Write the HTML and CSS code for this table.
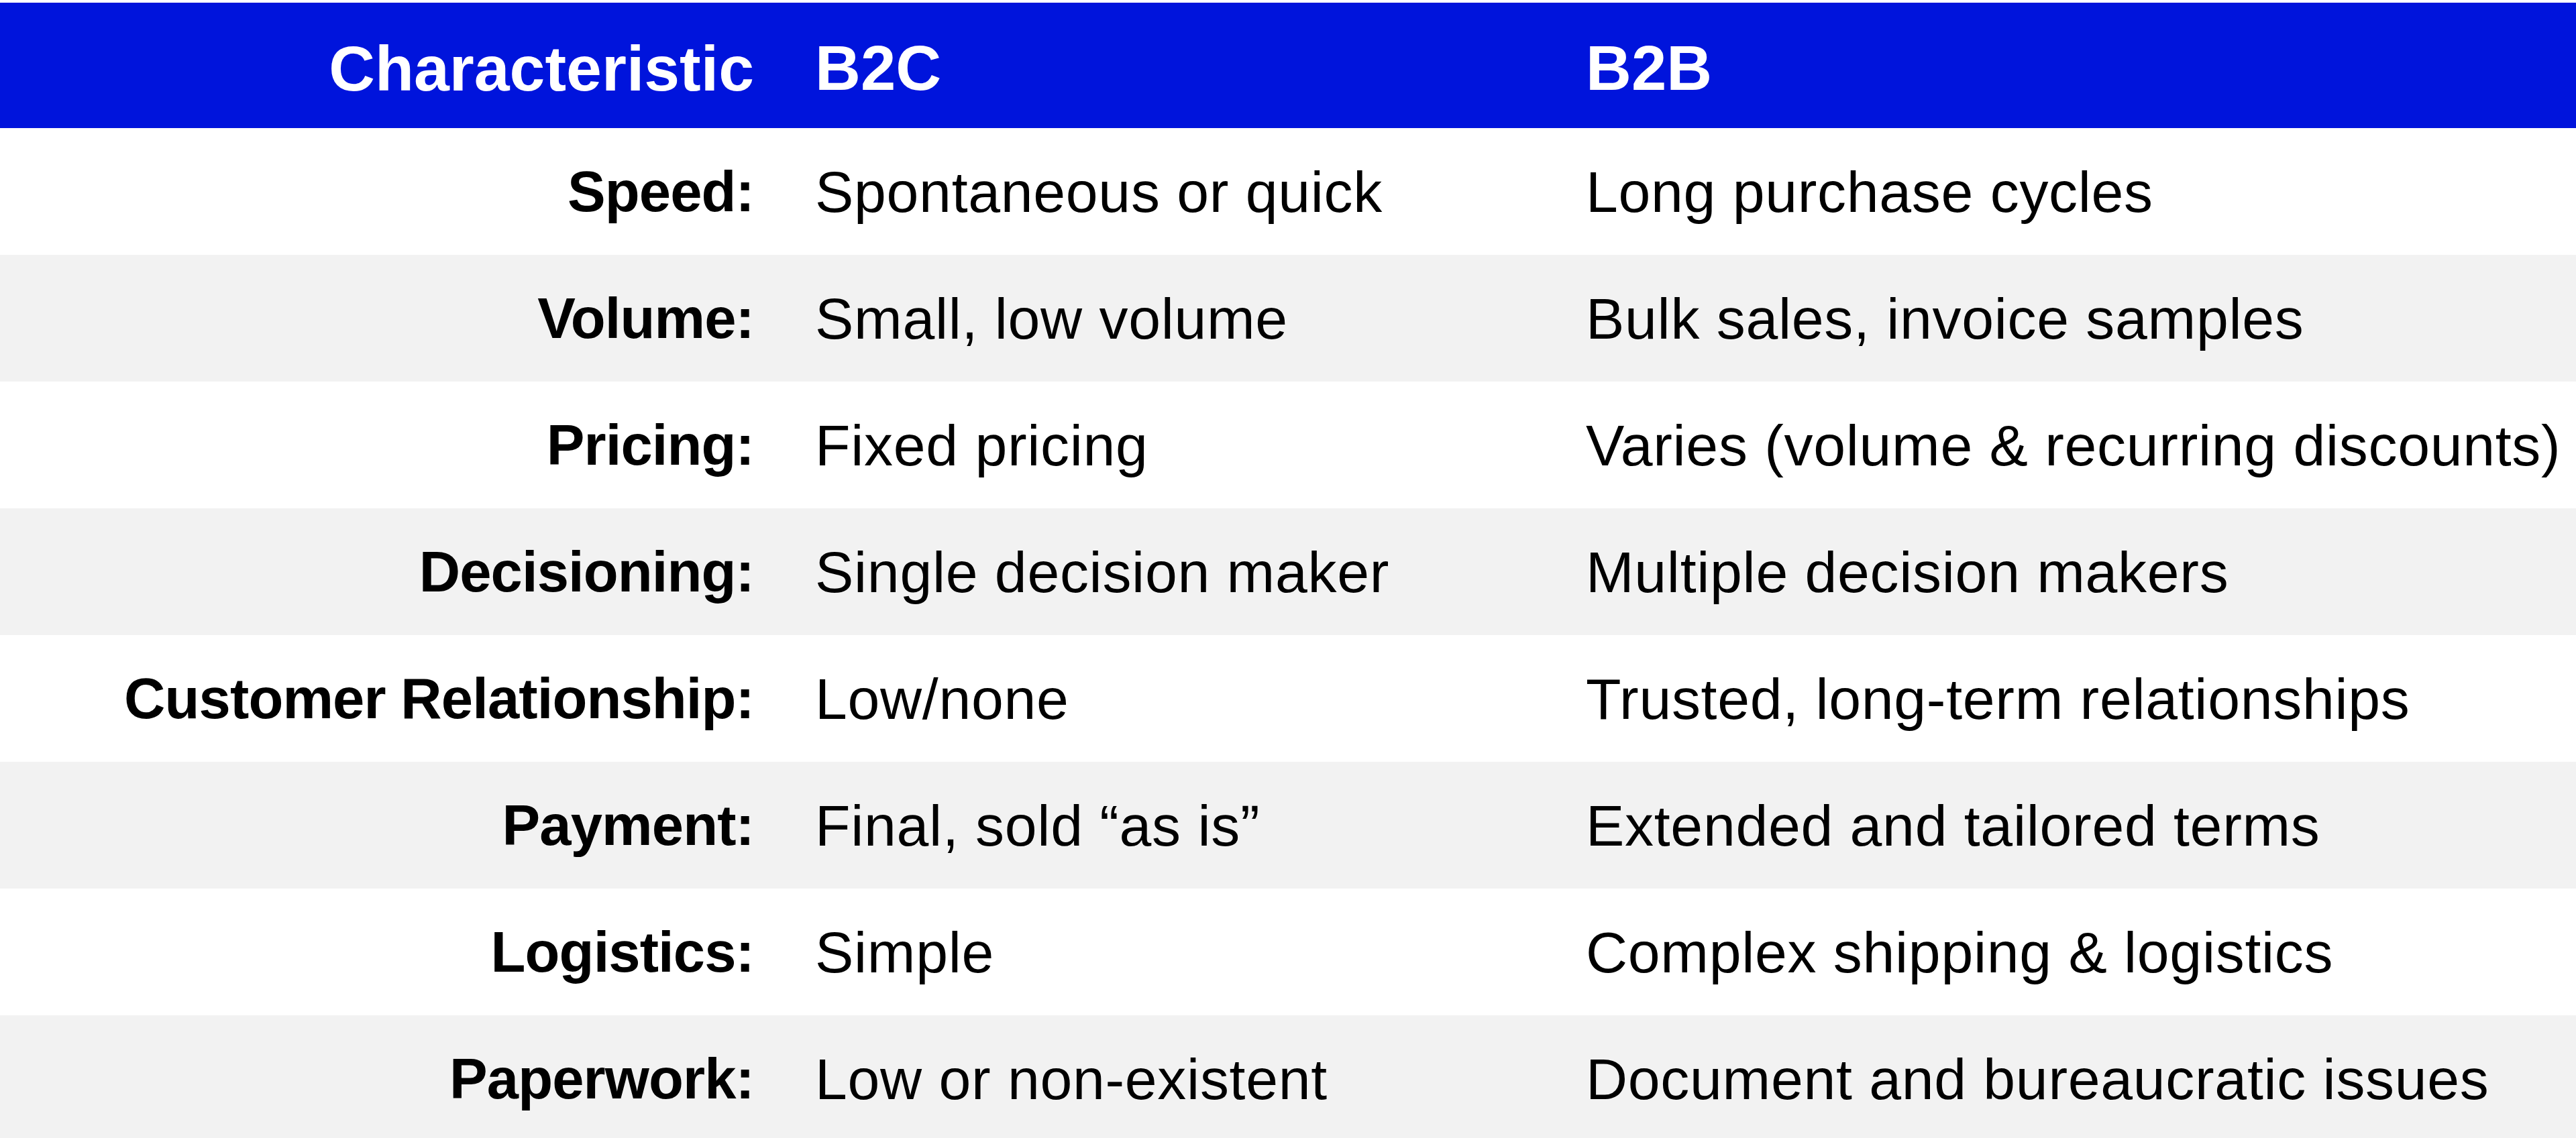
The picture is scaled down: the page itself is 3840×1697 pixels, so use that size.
FILE: index.html
```html
<!DOCTYPE html>
<html lang="en">
<head>
<meta charset="utf-8">
<title>B2C vs B2B</title>
<link rel="stylesheet" href="styles.css">
</head>
<body>
<div class="table">
  <div class="row head">
    <div class="cell label">Characteristic</div>
    <div class="cell">B2C</div>
    <div class="cell">B2B</div>
  </div>
  <div class="row">
    <div class="cell label">Speed:</div>
    <div class="cell">Spontaneous or quick</div>
    <div class="cell">Long purchase cycles</div>
  </div>
  <div class="row alt">
    <div class="cell label">Volume:</div>
    <div class="cell">Small, low volume</div>
    <div class="cell">Bulk sales, invoice samples</div>
  </div>
  <div class="row">
    <div class="cell label">Pricing:</div>
    <div class="cell">Fixed pricing</div>
    <div class="cell">Varies (volume &amp; recurring discounts)</div>
  </div>
  <div class="row alt">
    <div class="cell label">Decisioning:</div>
    <div class="cell">Single decision maker</div>
    <div class="cell">Multiple decision makers</div>
  </div>
  <div class="row">
    <div class="cell label">Customer Relationship:</div>
    <div class="cell">Low/none</div>
    <div class="cell">Trusted, long-term relationships</div>
  </div>
  <div class="row alt">
    <div class="cell label">Payment:</div>
    <div class="cell">Final, sold “as is”</div>
    <div class="cell">Extended and tailored terms</div>
  </div>
  <div class="row">
    <div class="cell label">Logistics:</div>
    <div class="cell">Simple</div>
    <div class="cell">Complex shipping &amp; logistics</div>
  </div>
  <div class="row alt">
    <div class="cell label">Paperwork:</div>
    <div class="cell">Low or non-existent</div>
    <div class="cell">Document and bureaucratic issues</div>
  </div>
</div>
</body>
</html>
```
FILE: styles.css
```css
html, body {
  margin: 0;
  padding: 0;
  overflow: hidden;
  background: #ffffff;
}

body {
  padding-top: 4px;
  font-family: "Liberation Sans", Arial, Helvetica, sans-serif;
  color: #000000;
}

.table {
  display: flex;
  flex-direction: column;
}

.row {
  display: grid;
  grid-template-columns: 1124px 1058px 1fr;
  column-gap: 91px;
  align-items: center;
  height: 189px;
  font-size: 86px;
  letter-spacing: 0.7px;
  line-height: 1;
  background: #ffffff;
}

.row.alt {
  background: #f2f2f2;
}

.row.head {
  height: 187px;
  box-sizing: border-box;
  padding-top: 9px;
  background: #0014dc;
  color: #ffffff;
  font-size: 94px;
  font-weight: bold;
  letter-spacing: 0;
}

.cell {
  white-space: nowrap;
}

.label {
  text-align: right;
  font-weight: bold;
  font-size: 85px;
  letter-spacing: -0.9px;
}

.head .label {
  font-size: 95px;
  letter-spacing: 0;
}
```
